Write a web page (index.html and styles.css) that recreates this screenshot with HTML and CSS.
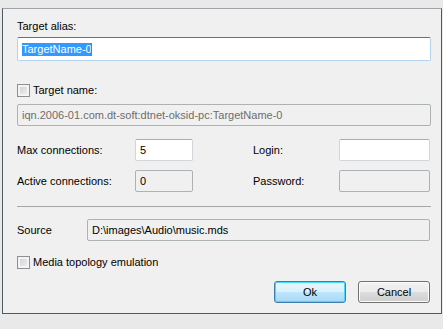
FILE: index.html
```html
<!DOCTYPE html>
<html lang="en">
<head>
<meta charset="UTF-8" />
<title>Target properties</title>
<link rel="stylesheet" href="styles.css">
</head>
<body>

<div class="dialog">
  <div class="label">Target alias:</div>
  <div class="field focused"><span class="sel">TargetName-0</span><span class="caret"></span></div>

  <div class="check-row first"><span class="check"></span><span>Target name:</span></div>
  <div class="field disabled dim">iqn.2006-01.com.dt-soft:dtnet-oksid-pc:TargetName-0</div>

  <div class="conn">
    <span>Max connections:</span>
    <div class="field">5</div>
    <span></span>
    <span>Login:</span>
    <div class="field"></div>

    <span>Active connections:</span>
    <div class="field disabled">0</div>
    <span></span>
    <span>Password:</span>
    <div class="field disabled"></div>
  </div>

  <div class="sep"></div>

  <div class="source">
    <span>Source</span>
    <div class="field disabled">D:\images\Audio\music.mds</div>
  </div>

  <div class="check-row media"><span class="check"></span><span>Media topology emulation</span></div>

  <div class="buttons">
    <button class="btn default">Ok</button>
    <button class="btn">Cancel</button>
  </div>
</div>

</body>
</html>
```

FILE: styles.css
```css
body {
  margin: 0;
  padding: 8px 0 0 2px;
  background: #e9e9e9;
  font-family: "Liberation Sans", Arial, sans-serif;
  font-size: 11px;
  color: #000;
}
.dialog {
  box-sizing: border-box;
  width: 440px;
  height: 306px;
  background: #f0f0f0;
  border: 1px solid #4e5a66;
  border-top-color: #9ea4aa;
  padding: 11px 10px 0 14px;
}
.label {
  line-height: 13px;
}
.field {
  box-sizing: border-box;
  height: 22px;
  line-height: 20px;
  padding: 0 4px;
  background: #fff;
  border: 1px solid #d2d5da;
  border-top-color: #abadb3;
  border-radius: 2px;
  white-space: nowrap;
  overflow: hidden;
}
.field.disabled {
  background: #f0f0f0;
  border-color: #adb2b5;
}
.field.dim {
  color: #6d6d6d;
}
.field.focused {
  height: 24px;
  margin-top: 4px;
  border-color: #b5d3ea;
  border-top-color: #3d7bad;
  display: flex;
  align-items: center;
}
.sel {
  background: #3399ff;
  color: #fff;
  line-height: 13px;
}
.caret {
  width: 1px;
  height: 13px;
  background: #cc6600;
  margin-left: -1px;
}
.check-row {
  display: flex;
  align-items: center;
  gap: 3px;
  height: 13px;
  line-height: 13px;
}
.check-row.first {
  margin-top: 23px;
  margin-bottom: 7px;
}
.check-row.media {
  margin-top: 15px;
}
.check {
  box-sizing: border-box;
  width: 13px;
  height: 13px;
  border: 1px solid #8e8f8f;
  background: linear-gradient(135deg, #c9cdd3, #f3f3f4);
  box-shadow: inset 0 0 0 2px #f4f4f4;
}
.conn {
  display: grid;
  grid-template-columns: 118px 58px 60px 86px 91px;
  grid-auto-rows: 22px;
  row-gap: 9px;
  align-items: center;
  margin-top: 13px;
}
.sep {
  height: 1px;
  background: #a5a5a5;
  margin: 14px 0 12px;
}
.source {
  display: grid;
  grid-template-columns: 70px 343px;
  align-items: center;
}
.buttons {
  display: flex;
  justify-content: flex-end;
  gap: 12px;
  width: 413px;
  margin-top: 12px;
}
.btn {
  width: 72px;
  height: 22px;
  padding: 0;
  font: inherit;
  color: #000;
  border: 1px solid #707070;
  border-radius: 3px;
  background: linear-gradient(#f2f2f2 0%, #ebebeb 50%, #dddddd 50%, #cfcfcf 100%);
  box-shadow: inset 0 0 0 1px #fcfcfc;
}
.btn.default {
  border-color: #3c7fb1;
  background: linear-gradient(#eaf6fd 0%, #d9f0fc 50%, #bee6fd 50%, #a7d9f5 100%);
  box-shadow: inset 0 0 0 1px #48d8fb;
}
```
